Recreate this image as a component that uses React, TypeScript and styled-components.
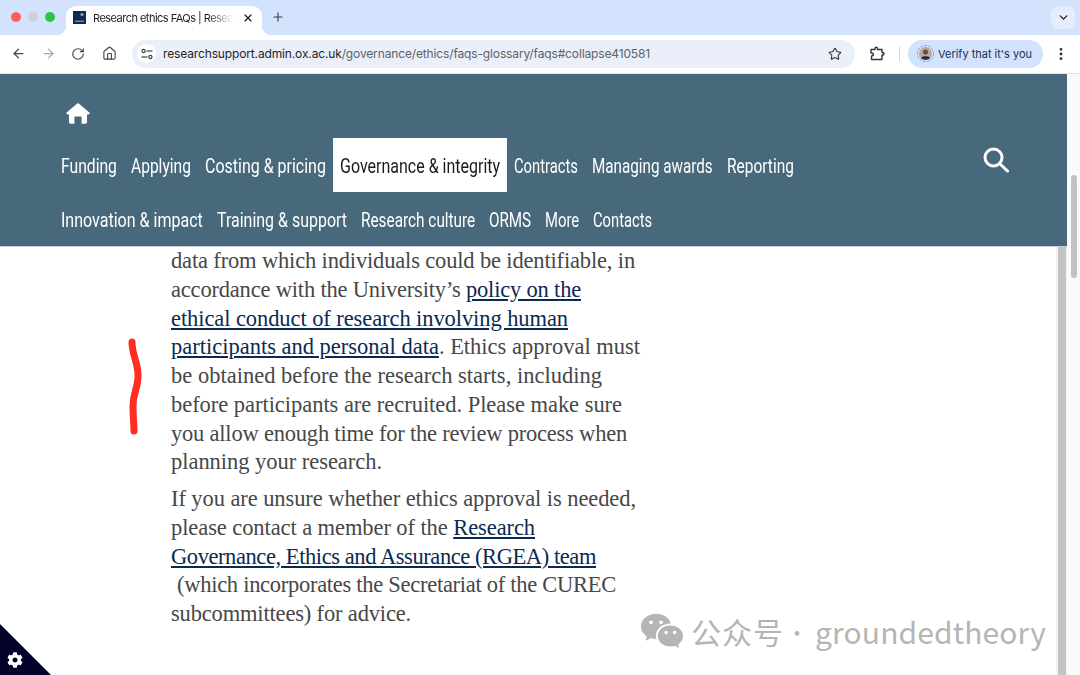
import React, { useLayoutEffect, useRef } from "react";
import styled, { createGlobalStyle } from "styled-components";
import { ArrowLeft, ArrowRight, RotateCw, Home, Star, X, Plus, ChevronDown, EllipsisVertical } from "lucide-react";
import { FaCog } from "react-icons/fa";
import { RiWechatFill } from "react-icons/ri";

const Global = createGlobalStyle`
  html, body { margin: 0; padding: 0; background: #fff; }
  body { width: 1080px; height: 675px; overflow: hidden; font-family: "Inter", "Liberation Sans", sans-serif; }
`;

const Frame = styled.div`
  position: relative; width: 1080px; height: 675px; overflow: hidden;
  display: flex; flex-direction: column; background: #fff;
`;

/* ---------- browser chrome ---------- */
const TabStrip = styled.div`
  height: 35px; flex: none; background: #d3e3fd;
  display: flex; align-items: flex-end; padding-left: 10px;
`;
const Lights = styled.div`
  display: flex; gap: 7px; align-self: flex-start; margin-top: 12px; margin-left: 1px; width: 55px;
`;
const Light = styled.span<{ $c: string }>`
  width: 10px; height: 10px; border-radius: 50%; background: ${p => p.$c};
`;
const Tab = styled.div`
  position: relative; width: 196px; height: 29px; background: #fff; border-radius: 10px 10px 0 0;
  display: flex; align-items: center; padding: 0 0 6px 7px; box-sizing: border-box; gap: 7px;
  &::before, &::after {
    content: ""; position: absolute; bottom: 0; width: 10px; height: 10px;
  }
  &::before { left: -10px; background: radial-gradient(circle at 0 0, #d3e3fd 10px, #fff 10.5px); }
  &::after { right: -10px; background: radial-gradient(circle at 100% 0, #d3e3fd 10px, #fff 10.5px); }
`;
const Favicon = styled.svg`flex: none;`;
const TabTitle = styled.div`
  width: 140px; white-space: nowrap; font-size: 11px; color: #1f1f1f;
  -webkit-mask-image: linear-gradient(90deg, #000 82%, transparent 100%);
  mask-image: linear-gradient(90deg, #000 82%, transparent 100%);
`;
const TabClose = styled.span`
  display: flex; color: #1f1f1f; margin-left: 2px;
`;
const NewTab = styled.span`
  display: flex; color: #3c4043; align-self: flex-start; margin: 10px 0 0 9px;
`;
const StripEnd = styled.div`
  margin-left: auto; margin-right: 5px; align-self: flex-start; margin-top: 6px;
  width: 24px; height: 23px; border-radius: 8px; background: #e6eefc;
  display: flex; align-items: center; justify-content: center; color: #1f1f1f;
`;

const Toolbar = styled.div`
  height: 39px; flex: none; box-sizing: border-box; background: #fff;
  border-bottom: 1px solid #dfe3e8; display: flex; align-items: center; padding: 0 0 1px 11px;
`;
const NavIcon = styled.span<{ $c?: string; $w?: number }>`
  display: flex; width: ${p => p.$w ?? 30}px; color: ${p => p.$c ?? "#474747"};
`;
const Omnibox = styled.div`
  margin-left: 3px; width: 723px; height: 28px; border-radius: 14px; background: #eaeffa;
  display: flex; align-items: center; padding: 0 13px 0 5px; box-sizing: border-box;
`;
const TuneChip = styled.span`
  width: 19px; height: 19px; border-radius: 50%; background: #fff;
  display: flex; align-items: center; justify-content: center; flex: none; margin-right: 7px;
`;
const Url = styled.div`
  font-size: 12px; color: #5f6368; white-space: nowrap; flex: 1;
  b { font-weight: 400; color: #1f1f1f; }
`;
const Extension = styled.svg`margin-left: 15px; flex: none;`;
const Separator = styled.span`
  width: 1px; height: 14px; background: #c7d7f0; margin-left: 14px; flex: none;
`;
const Pill = styled.div`
  margin-left: 8px; width: 135px; height: 28px; border-radius: 14px; background: #d3e3fd; flex: none;
  display: flex; align-items: center; padding-left: 9px; box-sizing: border-box; gap: 4px;
  font-size: 11px; color: #1b2e4f; white-space: nowrap;
`;
const Kebab = styled.span`display: flex; color: #333; margin-left: 10px;`;

/* ---------- page ---------- */
const Page = styled.div`flex: 1; display: flex; min-height: 0;`;
const Viewport = styled.div`flex: 1; display: flex; flex-direction: column; min-width: 0;`;
const OuterTrack = styled.div`
  width: 13px; flex: none; background: #fafafa; padding: 101px 3px 0 4px; box-sizing: border-box;
`;
const OuterThumb = styled.div`height: 103px; border-radius: 3px; background: #c2c2c2;`;

const Header = styled.header`
  flex: none; height: 173px; box-sizing: border-box; background: #48697b;
  border-bottom: 1px solid #c3d0d7; display: flex; justify-content: space-between;
`;
const HeaderMain = styled.div`display: flex; flex-direction: column; padding-left: 54px;`;
const HomeRow = styled.div`height: 64px; display: flex; align-items: center; padding: 14px 0 0 12px; box-sizing: border-box;`;
const NavRow = styled.nav`display: flex; height: 54px;`;
const NavItem = styled.a<{ $active?: boolean }>`
  display: flex; align-items: center; padding: 2px 7px 0; height: 54px; box-sizing: border-box;
  font-family: "Roboto", "Liberation Sans", sans-serif;
  font-size: 21px; white-space: nowrap;
  color: ${p => (p.$active ? "#1a1a1a" : "#fff")};
  background: ${p => (p.$active ? "#fff" : "transparent")};
`;
const SqueezeBox = styled.span<{ $w: number }>`
  display: block; width: ${p => p.$w}px;
`;
const SqueezeInner = styled.span`
  display: inline-block; white-space: nowrap; transform-origin: 0 50%;
`;
const SearchSlot = styled.div`padding: 73px 58px 0 0; color: #fff;`;

const ContentRow = styled.div`flex: 1; display: flex; min-height: 0;`;
const Article = styled.main`
  flex: 1; padding-left: 171px;
  font-family: "Liberation Serif", serif; font-size: 22.5px; line-height: 28.75px; color: #474747;
`;
const Para = styled.p`margin: 0 0 8px;`;
const Line = styled.span<{ $indent?: number }>`
  display: block; white-space: nowrap; padding-left: ${p => p.$indent ?? 0}px;
`;
const Link = styled.a`color: #0a2a52; text-decoration: underline; text-underline-offset: 2px;`;
const FitBox = styled.span`display: inline-block; white-space: nowrap;`;
const InnerTrack = styled.div`
  width: 11px; flex: none; background: #f1f1f1; padding-left: 2px; padding-right: 1px; box-sizing: border-box;
`;
const InnerThumb = styled.div`height: 100%; background: #c4c4c4;`;

/* ---------- overlays ---------- */
const Scribble = styled.svg`position: absolute; left: 124px; top: 334px;`;
const CookieCorner = styled.div`
  position: absolute; left: 0; bottom: 0; width: 51px; height: 51px; background: #02012a;
  clip-path: polygon(0 0, 100% 100%, 0 100%);
`;
const CookieGear = styled.span`position: absolute; left: 7px; bottom: 7px; display: flex; color: #fff;`;
const Watermark = styled.div`
  position: absolute; left: 639px; top: 608px; display: flex; align-items: center;
  color: #b5b5b5; font-family: "Noto Sans CJK SC", "Noto Sans", sans-serif; font-size: 30px; line-height: 40px; white-space: nowrap;
`;
const WatermarkLabel = styled.span`margin-left: 6px;`;
const WatermarkDot = styled.span`width: 26px; text-align: center; font-size: 22px;`;
const WatermarkName = styled.span`margin-left: 5px;`;

function Fit({ w, children }: { w: number; children: React.ReactNode }) {
  const ref = useRef<HTMLSpanElement>(null);
  useLayoutEffect(() => {
    const el = ref.current;
    if (!el) return;
    el.style.letterSpacing = "0px";
    const cur = el.getBoundingClientRect().width;
    el.style.letterSpacing = `${(w - cur) / (el.textContent || "x").length}px`;
  }, [w]);
  return <FitBox ref={ref}>{children}</FitBox>;
}

/* condensed face is not installed: the natural width is measured and narrowed to fit */
function Squeeze({ w, children }: { w: number; children: React.ReactNode }) {
  const ref = useRef<HTMLSpanElement>(null);
  useLayoutEffect(() => {
    const el = ref.current;
    if (!el) return;
    el.style.transform = `scaleX(${w / el.offsetWidth})`;
  }, [w]);
  return <SqueezeBox $w={w}><SqueezeInner ref={ref}>{children}</SqueezeInner></SqueezeBox>;
}

const row1 = [["Funding", 56], ["Applying", 60], ["Costing & pricing", 121], ["Governance & integrity", 160, true], ["Contracts", 64], ["Managing awards", 121], ["Reporting", 67]] as const;
const row2 = [["Innovation & impact", 142], ["Training & support", 130], ["Research culture", 114], ["ORMS", 42], ["More", 34], ["Contacts", 59]] as const;

export default function App() {
  return (
    <Frame>
      <Global />
      <TabStrip>
        <Lights>
          <Light $c="#ff5f57" /><Light $c="#cdd3dd" /><Light $c="#2ac840" />
        </Lights>
        <Tab>
          <Favicon width="13" height="13" viewBox="0 0 13 13">
            <rect width="13" height="13" fill="#0d2b4e" />
            <circle cx="9" cy="3.5" r="1.6" fill="#8fa6bd" />
            <rect x="2" y="9.5" width="9" height="1.5" fill="#6f88a3" />
          </Favicon>
          <TabTitle><Fit w={140}>Research ethics FAQs | Resea</Fit></TabTitle>
          <TabClose><X size={12} strokeWidth={2.4} /></TabClose>
        </Tab>
        <NewTab><Plus size={14} strokeWidth={2} /></NewTab>
        <StripEnd><ChevronDown size={13} strokeWidth={2.5} /></StripEnd>
      </TabStrip>
      <Toolbar>
        <NavIcon><ArrowLeft size={15} strokeWidth={2} /></NavIcon>
        <NavIcon $c="#a8abaf"><ArrowRight size={15} strokeWidth={2} /></NavIcon>
        <NavIcon $w={31}><RotateCw size={14} strokeWidth={2} /></NavIcon>
        <NavIcon $w={27}><Home size={15} strokeWidth={1.8} /></NavIcon>
        <Omnibox>
          <TuneChip>
            <svg width="12" height="12" viewBox="0 0 12 12" fill="none" stroke="#3c4043" strokeWidth="1.2">
              <circle cx="2.6" cy="3" r="1.6" /><path d="M5.5 3H11.5" />
              <circle cx="9.4" cy="9" r="1.6" /><path d="M.5 9H6.5" />
            </svg>
          </TuneChip>
          <Url><Fit w={487}><b>researchsupport.admin.ox.ac.uk</b>/governance/ethics/faqs-glossary/faqs#collapse410581</Fit></Url>
          <Star size={14} strokeWidth={1.8} color="#333" />
        </Omnibox>
        <Extension width="15" height="15" viewBox="0 0 15 15" fill="none" stroke="#333" strokeWidth="1.4" strokeLinejoin="round">
          <path d="M1 3.5H5V2.5C5 .8 7.5 .8 7.5 2.5V3.5H12V6.5H13C14.3 6.5 14.3 9 13 9H12V13.5H1.5V10C3 10 3.4 9.3 3.4 8.5C3.4 7.7 2.7 6.8 1 7Z" />
        </Extension>
        <Separator />
        <Pill>
          <svg width="17" height="17" viewBox="0 0 17 17">
            <circle cx="8.5" cy="8.5" r="8" fill="none" stroke="#6f8fc4" strokeWidth="0.8" strokeDasharray="3 1" />
            <circle cx="8.5" cy="8.5" r="6.4" fill="#b9a79d" />
            <circle cx="8.5" cy="7" r="2.5" fill="#6b4a3a" />
            <path d="M3.8 13C5 10.8 12 10.8 13.2 13C11 15.4 6 15.4 3.8 13Z" fill="#2a2a3a" />
          </svg>
          <Fit w={94}>Verify that it's you</Fit>
        </Pill>
        <Kebab><EllipsisVertical size={16} strokeWidth={2.2} /></Kebab>
      </Toolbar>
      <Page>
        <Viewport>
          <Header>
            <HeaderMain>
              <HomeRow>
                <svg width="24" height="21" viewBox="0 0 24 21" fill="#fff">
                  <path d="M12 .3C12.5.3 13 .5 13.4.9L23.3 9.6C24 10.3 23.6 11.4 22.6 11.4H21V19C21 20 20.2 20.7 19.3 20.7H15.6V14.6C15.6 14 15.2 13.6 14.6 13.6H9.4C8.8 13.6 8.4 14 8.4 14.6V20.7H4.7C3.8 20.7 3 20 3 19V11.4H1.4C.4 11.4 0 10.3.7 9.6L10.6.9C11 .5 11.5.3 12 .3Z" />
                </svg>
              </HomeRow>
              <NavRow>
                {row1.map(([t, w, a]: any) => <NavItem key={t} $active={a}><Squeeze w={w}>{t}</Squeeze></NavItem>)}
              </NavRow>
              <NavRow>
                {row2.map(([t, w]) => <NavItem key={t}><Squeeze w={w}>{t}</Squeeze></NavItem>)}
              </NavRow>
            </HeaderMain>
            <SearchSlot>
              <svg width="26" height="26" viewBox="0 0 26 26" fill="none" stroke="#fff" strokeWidth="3" strokeLinecap="round">
                <circle cx="10.5" cy="10.5" r="8.5" /><path d="M17 17L24.5 24" />
              </svg>
            </SearchSlot>
          </Header>
          <ContentRow>
            <Article>
              <Para>
                <Line><Fit w={464}>data from which individuals could be identifiable, in</Fit></Line>
                <Line><Fit w={410}>accordance with the University’s <Link>policy on the</Link></Fit></Line>
                <Line><Fit w={397}><Link>ethical conduct of research involving human</Link></Fit></Line>
                <Line><Fit w={469}><Link>participants and personal data</Link>. Ethics approval must</Fit></Line>
                <Line><Fit w={431}>be obtained before the research starts, including</Fit></Line>
                <Line><Fit w={451}>before participants are recruited. Please make sure</Fit></Line>
                <Line><Fit w={456}>you allow enough time for the review process when</Fit></Line>
                <Line><Fit w={211}>planning your research.</Fit></Line>
              </Para>
              <Para>
                <Line><Fit w={465}>If you are unsure whether ethics approval is needed,</Fit></Line>
                <Line><Fit w={364}>please contact a member of the <Link>Research</Link></Fit></Line>
                <Line><Fit w={425}><Link>Governance, Ethics and Assurance (RGEA) team</Link></Fit></Line>
                <Line $indent={6}><Fit w={439}>(which incorporates the Secretariat of the CUREC</Fit></Line>
                <Line><Fit w={240}>subcommittees) for advice.</Fit></Line>
              </Para>
            </Article>
            <InnerTrack><InnerThumb /></InnerTrack>
          </ContentRow>
        </Viewport>
        <OuterTrack><OuterThumb /></OuterTrack>
      </Page>

      <Scribble width="20" height="106" viewBox="0 0 20 106" fill="none">
        <path d="M8 8C8 22 15 30 14 44C13 56 9 60 9 72C9 82 10 90 10 97" stroke="#ff2d1f" strokeWidth="7" strokeLinecap="round" />
      </Scribble>
      <CookieCorner><CookieGear><FaCog size={16} /></CookieGear></CookieCorner>
      <Watermark>
        <RiWechatFill size={46} />
        <WatermarkLabel><Fit w={93}>公众号</Fit></WatermarkLabel>
        <WatermarkDot>·</WatermarkDot>
        <WatermarkName><Fit w={231}>groundedtheory</Fit></WatermarkName>
      </Watermark>
    </Frame>
  );
}
